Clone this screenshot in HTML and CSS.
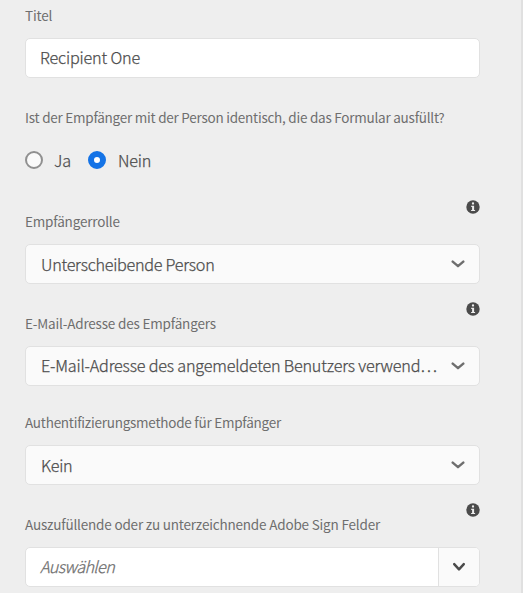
FILE: index.html
```html
<!DOCTYPE html>
<html lang="de">
<head>
<meta charset="utf-8">
<title>Recipient One</title>
<link rel="stylesheet" href="styles.css">
</head>
<body>
<svg width="0" height="0" class="defs">
  <symbol id="info" viewBox="0 0 14 14"><circle cx="7" cy="7" r="6.7" fill="#4b4b4b"/><circle cx="7" cy="3.5" r="1.15" fill="#eee"/><path d="M5.2 5.7h2.9v4.2h1v1.2H5.1V9.9h1V6.9h-.9z" fill="#eee"/></symbol>
  <symbol id="chevron" viewBox="0 0 14 8"><path d="M1.7 1.6 7 6.2l5.3-4.6" fill="none" stroke="currentColor" stroke-width="2.4" stroke-linecap="round" stroke-linejoin="round"/></symbol>
  <symbol id="chevron-small" viewBox="0 0 14 10"><path d="M2.2 2.2 7 7.3l4.8-5.1" fill="none" stroke="currentColor" stroke-width="2.5" stroke-linecap="round" stroke-linejoin="round"/></symbol>
</svg>
<main class="panel">
  <section class="field">
    <div class="head"><label class="label title">Titel</label></div>
    <div class="control input"><span class="value recipient">Recipient One</span></div>
  </section>
  <section class="field question">
    <div class="head"><span class="label identical">Ist der Empfänger mit der Person identisch, die das Formular ausfüllt?</span></div>
    <div class="radios">
      <span class="radio"><i class="dot"></i><span class="yes">Ja</span></span>
      <span class="radio"><i class="dot checked"></i><span class="no">Nein</span></span>
    </div>
  </section>
  <section class="field role">
    <div class="head tall"><span class="label">Empfängerrolle</span><svg class="info"><use href="#info"/></svg></div>
    <div class="control select"><span class="value signer">Unterscheibende Person</span><svg class="chevron"><use href="#chevron"/></svg></div>
  </section>
  <section class="field mail">
    <div class="head tall"><span class="label address">E-Mail-Adresse des Empfängers</span><svg class="info"><use href="#info"/></svg></div>
    <div class="control select"><span class="value user">E-Mail-Adresse des angemeldeten Benutzers verwend…</span><svg class="chevron"><use href="#chevron"/></svg></div>
  </section>
  <section class="field auth">
    <div class="head"><span class="label method">Authentifizierungsmethode für Empfänger</span></div>
    <div class="control select"><span class="value">Kein</span><svg class="chevron"><use href="#chevron"/></svg></div>
  </section>
  <section class="field sign">
    <div class="head tall"><span class="label fields">Auszufüllende oder zu unterzeichnende Adobe Sign Felder</span><svg class="info"><use href="#info"/></svg></div>
    <div class="control input combo"><span class="value placeholder">Auswählen</span><span class="toggle"><svg class="chevron-small"><use href="#chevron-small"/></svg></span></div>
  </section>
</main>
</body>
</html>
```
FILE: styles.css
```css
* { box-sizing: border-box; }
body { margin: 0; background: #eee; font-family: "Noto Sans CJK SC", "Noto Sans", sans-serif; color: #4b4b4b; overflow: hidden; }
.defs { display: none; }
svg { display: block; flex: none; }
.panel { width: 523px; height: 593px; padding: 5px 41px 0 25px; border-right: 2px solid #e0e0e0; }
.head { display: flex; justify-content: space-between; align-items: flex-end; height: 20px; margin-bottom: 13px; }
.head.tall { height: 31px; }
.label { font-size: 13.5px; line-height: 20px; letter-spacing: -0.18px; color: #6e6e6e; white-space: nowrap; }
.identical, .method { letter-spacing: -0.24px; }
.info { width: 14px; height: 14px; align-self: flex-start; margin-right: 0.5px; }
.control { display: flex; align-items: center; height: 40px; width: 455px; border: 1px solid #e1e1e1; border-radius: 5px; overflow: hidden; }
.input { background: #fff; padding-left: 14px; }
.select { background: #fafafa; padding: 0 14.5px 0 15px; justify-content: space-between; }
.value, .radios { font-size: 16.2px; font-weight: 300; -webkit-text-stroke: 0.25px currentColor; white-space: nowrap; }
.value { line-height: 24px; letter-spacing: -0.27px; margin-top: -1px; }
.recipient { letter-spacing: -0.17px; margin-top: -2px; }
.user { letter-spacing: -0.2px; margin-top: -2px; }
.chevron { width: 14px; height: 8px; color: #6e6e6e; }
.question { margin-top: 29px; }
.radios { display: flex; height: 20px; margin-top: 23px; line-height: 20px; letter-spacing: -0.15px; }
.question .head { margin-bottom: 0; }
.radio { display: flex; align-items: center; width: 63px; }
.dot { flex: none; width: 18px; height: 18px; margin-right: 12px; border: 2px solid #909090; border-radius: 50%; background: #fafafa; }
.yes { margin-left: -1px; }
.checked { border: 6px solid #1473e6; background: #fff; }
.role { margin-top: 30px; }
.mail { margin-top: 18px; }
.auth { margin-top: 26px; }
.sign { margin-top: 18px; }
.combo { justify-content: space-between; }
.placeholder { font-style: italic; color: #6e6e6e; letter-spacing: -0.58px; margin-top: -2px; }
.toggle { display: flex; align-items: center; justify-content: center; width: 41px; height: 38px; border-left: 1px solid #e1e1e1; background: #fafafa; }
.chevron-small { width: 14px; height: 10px; color: #4b4b4b; }
```
